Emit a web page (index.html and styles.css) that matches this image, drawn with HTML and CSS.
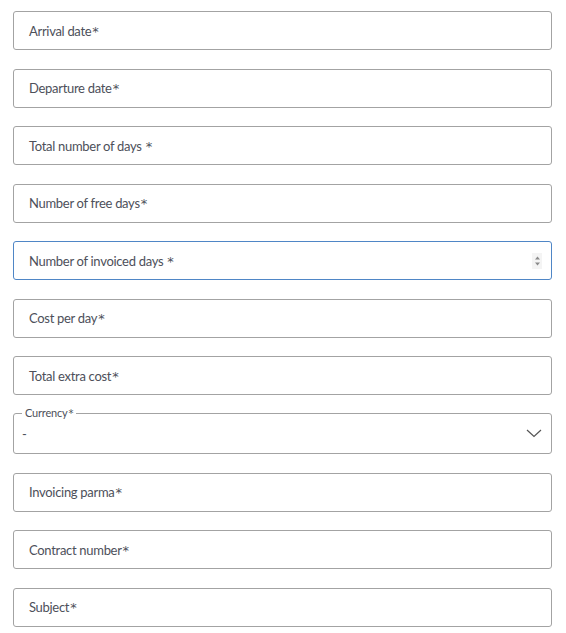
FILE: index.html
```html
<!DOCTYPE html>
<html>
<head>
<meta charset="utf-8">
<link rel="stylesheet" href="styles.css">
</head>
<body>
<form class="form">
  <div class="field"><span class="label">Arrival date<span class="req">*</span></span></div>
  <div class="field"><span class="label">Departure date<span class="req">*</span></span></div>
  <div class="field"><span class="label">Total number of days <span class="req sp">*</span></span></div>
  <div class="field"><span class="label">Number of free days<span class="req">*</span></span></div>
  <div class="field focused"><span class="label">Number of invoiced days <span class="req sp">*</span></span>
    <span class="spinner">
      <svg width="7" height="12" viewBox="0 0 7 12"><path d="M3.5 1.5 L6 4.5 L1 4.5 Z" fill="#8a8a8a"/><path d="M3.5 10.5 L6 7.5 L1 7.5 Z" fill="#8a8a8a"/></svg>
    </span>
  </div>
  <div class="field"><span class="label">Cost per day<span class="req">*</span></span></div>
  <div class="field"><span class="label">Total extra cost<span class="req">*</span></span></div>
  <fieldset class="select">
    <legend class="legend">Currency<span class="req">*</span></legend>
    <div class="select-row">
      <span class="value">-</span>
      <svg class="chev" width="16" height="9" viewBox="0 0 16 9"><path d="M1 1 L8 7.5 L15 1" fill="none" stroke="#555" stroke-width="1.2"/></svg>
    </div>
  </fieldset>
  <div class="field"><span class="label">Invoicing parma<span class="req">*</span></span></div>
  <div class="field"><span class="label">Contract number<span class="req">*</span></span></div>
  <div class="field"><span class="label">Subject<span class="req">*</span></span></div>
</form>
</body>
</html>
```
FILE: styles.css
```css
html, body {
  margin: 0;
  padding: 0;
  background: #fff;
}
body {
  font-family: Lato, "Liberation Sans", sans-serif;
  color: #4d505a;
}
.form {
  width: 539px;
  padding: 11px 0 0 13px;
  display: flex;
  flex-direction: column;
  gap: 18.5px;
}
.field {
  box-sizing: border-box;
  height: 39px;
  border: 1px solid #a3a3a3;
  border-radius: 3px;
  display: flex;
  align-items: center;
  justify-content: space-between;
  padding: 0 9px 0 15px;
  font-size: 13px;
  letter-spacing: -0.3px;
}
.field.focused {
  border-color: #4f86c6;
}
.req {
  font-family: "DejaVu Sans", sans-serif;
  font-size: 13px;
  margin-left: 1px;
  letter-spacing: 0;
}
.req.sp {
  margin-left: 1px;
}
.spinner {
  display: flex;
  align-items: center;
  justify-content: center;
  width: 10px;
  height: 16px;
  background: #f4f4f4;
}
.select {
  display: block;
  box-sizing: border-box;
  margin: -6.5px 0 0 0;
  padding: 0 9px 0 8px;
  border: 1px solid #a3a3a3;
  border-radius: 3px;
  min-width: 0;
}
.legend {
  font-size: 11px;
  line-height: 11px;
  padding: 0 3px;
  letter-spacing: -0.2px;
}
.legend .req {
  font-size: 10px;
}
.select-row {
  box-sizing: border-box;
  height: 34px;
  padding-bottom: 5px;
  display: flex;
  align-items: center;
  justify-content: space-between;
}
.value {
  font-size: 13px;
}
```
